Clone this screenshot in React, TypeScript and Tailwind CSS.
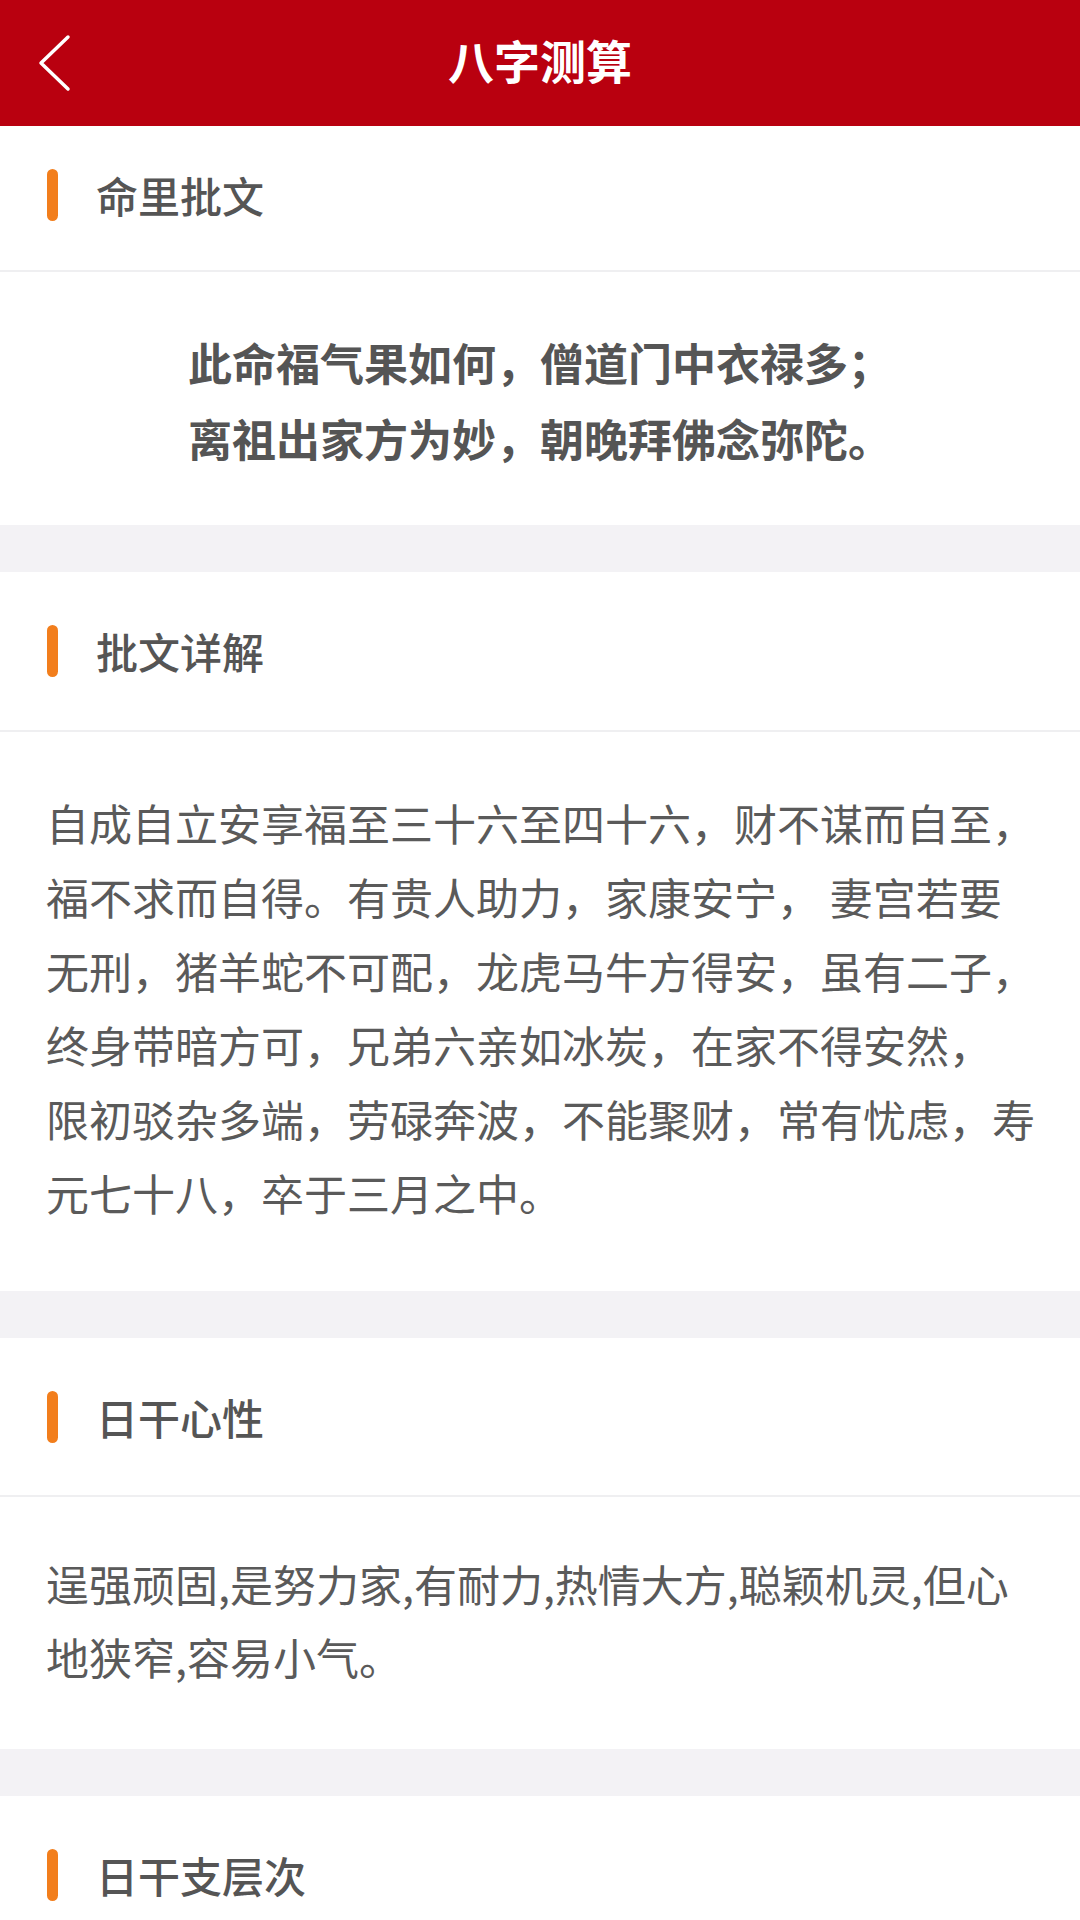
import React from 'react';

// 섹션 제목 (주황색 막대 + 제목)
const SectionHeader = ({ title, height }: { title: string; height: string }) => (
  <div className={`flex items-center px-[47px] border-b-2 border-[#efeff1] ${height}`}>
    <span className="block w-[11px] h-[52px] rounded-full bg-[#f27e1c]" />
    <h2 className="ml-[38px] text-[42px] leading-none font-medium text-[#555555]">{title}</h2>
  </div>
);

const Lines = ({ lines, className }: { lines: string[]; className: string }) => (
  <div className={className}>
    {lines.map((l, i) => (
      <p key={i} className="whitespace-pre">{l}</p>
    ))}
  </div>
);

export default function App() {
  const poem = ['此命福气果如何，僧道门中衣禄多；', '离祖出家方为妙，朝晚拜佛念弥陀。'];
  const detail = [
    '自成自立安享福至三十六至四十六，财不谋而自至，',
    '福不求而自得。有贵人助力，家康安宁， 妻宫若要',
    '无刑，猪羊蛇不可配，龙虎马牛方得安，虽有二子，',
    '终身带暗方可，兄弟六亲如冰炭，在家不得安然，',
    '限初驳杂多端，劳碌奔波，不能聚财，常有忧虑，寿',
    '元七十八，卒于三月之中。',
  ];
  const nature = ['逞强顽固,是努力家,有耐力,热情大方,聪颖机灵,但心', '地狭窄,容易小气。'];

  return (
    <div className="w-[1080px] h-[1920px] overflow-hidden bg-[#f3f2f5] font-['Noto_Sans_CJK_SC','Noto_Sans',sans-serif]">
      {/* 헤더 */}
      <header className="grid grid-cols-[1fr_auto_1fr] items-center h-[126px] bg-[#b9000f]">
        <button className="pl-[36px] justify-self-start">
          <svg width="40" height="60" viewBox="0 0 40 60" fill="none">
            <path d="M32 4 L5 30 L32 56" stroke="#ffffff" strokeWidth="3.5" strokeLinecap="round" strokeLinejoin="round" />
          </svg>
        </button>
        <h1 className="text-[46px] font-semibold text-white leading-none -mt-[8px]">八字测算</h1>
        <div />
      </header>

      <main className="flex flex-col gap-[47px]">
        <section className="bg-white">
          <SectionHeader title="命里批文" height="h-[146px] pb-[6px]" />
          <Lines
            lines={poem}
            className="pt-[52px] pb-[49px] text-center text-[44px] leading-[76px] font-bold text-[#555555]"
          />
        </section>

        <section className="bg-white">
          <SectionHeader title="批文详解" height="h-[160px]" />
          <Lines
            lines={detail}
            className="pl-[46px] pt-[53px] pb-[62px] text-[43px] leading-[74px] text-[#5a5a5a]"
          />
        </section>

        <section className="bg-white">
          <SectionHeader title="日干心性" height="h-[159px]" />
          <Lines
            lines={nature}
            className="pl-[46px] pt-[50px] pb-[56px] text-[43px] leading-[73px] text-[#5a5a5a]"
          />
        </section>

        <section className="bg-white">
          <SectionHeader title="日干支层次" height="h-[160px]" />
        </section>
      </main>
    </div>
  );
}
